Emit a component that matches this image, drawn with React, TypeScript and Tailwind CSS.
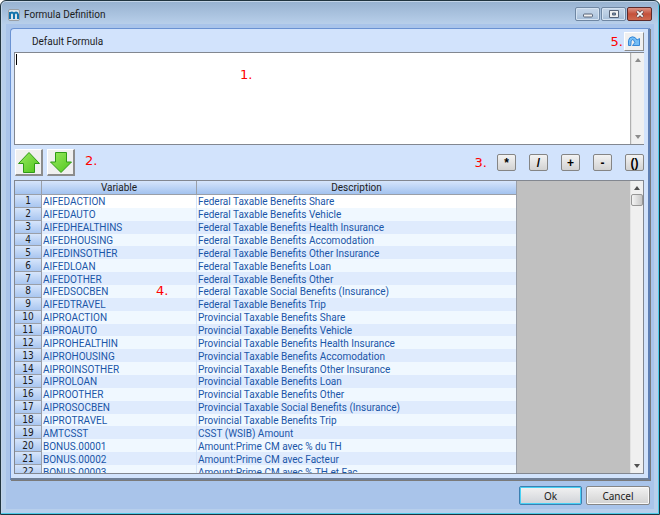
import React from "react";

const variables: [string, string][] = [
  ["AIFEDACTION", "Federal Taxable Benefits Share"],
  ["AIFEDAUTO", "Federal Taxable Benefits Vehicle"],
  ["AIFEDHEALTHINS", "Federal Taxable Benefits Health Insurance"],
  ["AIFEDHOUSING", "Federal Taxable Benefits Accomodation"],
  ["AIFEDINSOTHER", "Federal Taxable Benefits Other Insurance"],
  ["AIFEDLOAN", "Federal Taxable Benefits Loan"],
  ["AIFEDOTHER", "Federal Taxable Benefits Other"],
  ["AIFEDSOCBEN", "Federal Taxable Social Benefits (Insurance)"],
  ["AIFEDTRAVEL", "Federal Taxable Benefits Trip"],
  ["AIPROACTION", "Provincial Taxable Benefits Share"],
  ["AIPROAUTO", "Provincial Taxable Benefits Vehicle"],
  ["AIPROHEALTHIN", "Provincial Taxable Benefits Health Insurance"],
  ["AIPROHOUSING", "Provincial Taxable Benefits Accomodation"],
  ["AIPROINSOTHER", "Provincial Taxable Benefits Other Insurance"],
  ["AIPROLOAN", "Provincial Taxable Benefits Loan"],
  ["AIPROOTHER", "Provincial Taxable Benefits Other"],
  ["AIPROSOCBEN", "Provincial Taxable Social Benefits (Insurance)"],
  ["AIPROTRAVEL", "Provincial Taxable Benefits Trip"],
  ["AMTCSST", "CSST (WSIB) Amount"],
  ["BONUS.00001", "Amount:Prime CM avec % du TH"],
  ["BONUS.00002", "Amount:Prime CM avec Facteur"],
  ["BONUS.00003", "Amount:Prime CM avec % TH et Fac"],
];

function Marker({ children, className = "" }: { children: React.ReactNode; className?: string }) {
  return (
    <span className={`font-['DejaVu_Sans',sans-serif] text-[13px] leading-4 text-[#ff0000] ${className}`}>
      {children}
    </span>
  );
}

function Arrow({ down = false, muted = false }: { down?: boolean; muted?: boolean }) {
  return (
    <svg viewBox="0 0 6 4" className={`h-1 w-1.5 ${muted ? "text-[#8c8c8c]" : "text-[#505050]"}`} aria-hidden="true">
      <path d={down ? "M0 0H6L3 4Z" : "M0 4H6L3 0Z"} fill="currentColor" />
    </svg>
  );
}

function ScrollBar({ thumb = false }: { thumb?: boolean }) {
  return (
    <div className="flex w-[13px] shrink-0 flex-col items-center justify-between border-l border-[#e3e3e3] bg-[#f0f0f0] py-[5px]">
      <div className="flex w-full flex-col items-center gap-1">
        <Arrow muted={!thumb} />
        {thumb && (
          <div className="h-3 w-full rounded-xs border border-[#979797] bg-linear-to-r from-[#f4f4f4] to-[#c6c6c6]" />
        )}
      </div>
      <Arrow down muted={!thumb} />
    </div>
  );
}

function GreenArrow({ down = false }: { down?: boolean }) {
  return (
    <button
      type="button"
      aria-label={down ? "Move down" : "Move up"}
      className="flex h-[27px] w-7 items-center justify-center border-t border-r-2 border-b-2 border-l border-t-white border-r-[#8c8c8c] border-b-[#8c8c8c] border-l-white bg-[#f0f0f0]"
    >
      <svg viewBox="0 0 24 23" className="h-[23px] w-6" aria-hidden="true">
        <defs>
          <linearGradient id={down ? "greenDown" : "greenUp"} x1="0" y1="0" x2="1" y2="1">
            <stop offset="0" stopColor="#9bea62" />
            <stop offset="1" stopColor="#4fc51c" />
          </linearGradient>
        </defs>
        <path
          d={down ? "M12 21.500 22.500 11H17.500V1.500H6.500V11H1.500Z" : "M12 1.500 22.500 12.500H17.500V21.500H6.500V12.500H1.500Z"}
          fill={down ? "url(#greenDown)" : "url(#greenUp)"}
          stroke="#2f9a16"
          strokeLinejoin="round"
        />
      </svg>
    </button>
  );
}

const captionButton =
  "flex h-[14px] w-[25px] items-center justify-center rounded-xs border border-[#6f87a3] bg-linear-to-b from-[#c6d7ea] via-[#b9cde3] via-50% to-[#a5bdd8] shadow-[inset_0_0_0_1px_#d5e3f2]";

export default function App() {
  return (
    <main className="flex h-screen flex-col rounded-t-md border border-[#20343f] bg-[#b7cfec] p-px font-['Roboto',sans-serif] text-[10px] text-[#1c1c1c] shadow-[inset_-1px_-1px_0_#4ccbe8,inset_1px_1px_0_#c3d5e8]">
      <header className="flex h-[22px] shrink-0 items-center justify-between rounded-t-sm bg-linear-to-b from-[#98b3d1] to-[#b8cfea] px-1.5 pt-1">
        <div className="flex items-center gap-1">
          <span className="flex h-3 w-3 items-center justify-center rounded-xs border border-[#9a9fa5] bg-[#dfe5ea]">
            <svg viewBox="0 0 10 8" className="h-2 w-2.5 shrink-0" aria-hidden="true">
              <path d="M1 8V1M1 3Q1.500 1.500 3 1.500T5 3.500V8M5 3.500Q5.500 1.500 7 1.500T9 3.500V8" fill="none" stroke="#1373ac" strokeWidth="2" />
            </svg>
          </span>
          <h1 className="leading-4">Formula Definition</h1>
        </div>
        <div className="flex gap-px pb-0.5">
          <button type="button" aria-label="Minimize" className={captionButton}>
            <svg viewBox="0 0 10 10" className="h-2.5 w-2.5" aria-hidden="true">
              <rect x=".5" y="5" width="9" height="3" rx="1" fill="#f1f1f1" stroke="#596579" />
            </svg>
          </button>
          <button type="button" aria-label="Maximize" className={captionButton}>
            <svg viewBox="0 0 10 8" className="h-2 w-2.5" aria-hidden="true">
              <path d="M.5 .5H9.500V7.500H.5Z" fill="#f1f1f1" stroke="#596579" />
              <path d="M3.500 3H6.500V5H3.500Z" fill="#7790ad" stroke="#596579" />
            </svg>
          </button>
          <button
            type="button"
            aria-label="Close"
            className="flex h-[14px] w-[25px] items-center justify-center rounded-xs border border-[#5e2a2a] bg-linear-to-b from-[#dc9385] via-[#c4503a] via-50% to-[#cf6a50]"
          >
            <svg viewBox="0 0 10 8" className="h-2 w-2.5" aria-hidden="true">
              <path d="M2 1.200 8 6.800M8 1.200 2 6.800" stroke="#5b4348" strokeWidth="3.200" />
              <path d="M2.200 1.400 7.800 6.600M7.800 1.400 2.200 6.600" stroke="#f7f7f7" strokeWidth="1.800" />
            </svg>
          </button>
        </div>
      </header>

      <div className="mx-1 mb-1 flex min-h-0 flex-1 flex-col bg-[#a9c4ea] px-1 pt-1">
        <section className="flex min-h-0 flex-1 flex-col rounded-tl-sm border border-r-2 border-b-2 border-[#6a92d2] border-r-[#5f80b4] border-b-[#6f7f96] bg-[#d2e3fc] pr-1 pb-1 pl-[3px] shadow-[1px_1px_0_#7a7a7a]">
          <div className="flex h-[23px] items-center justify-between pt-0.5 pl-[18px]">
            <label htmlFor="formula">Default Formula</label>
            <div className="flex items-center gap-px">
              <Marker>5.</Marker>
              <button
                type="button"
                aria-label="Undo"
                className="flex h-[19px] w-5 items-center justify-center border border-white border-r-[#8c8c8c] border-b-[#8c8c8c] bg-[#f0f0f0]"
              >
                <svg viewBox="0 0 12 11" className="h-[11px] w-3" aria-hidden="true">
                  <path
                    d="M.5 9.500V4.500Q1 1 4.500 .800Q7.500 .800 9 4L11.500 2.500V9.500H4.500L6.800 6.500Q6 3.500 4.300 3.500Q2.800 4 2.800 9.500Z"
                    fill="#74bdf5"
                    stroke="#2a7fd2"
                    strokeWidth=".9"
                    strokeLinejoin="round"
                  />
                </svg>
              </button>
            </div>
          </div>

          <div className="relative flex h-[93px] shrink-0 border-y border-l border-[#828790]">
            <textarea
              id="formula"
              className="min-w-0 flex-1 resize-none overflow-hidden border-r border-[#b0b0b0] bg-white p-1 outline-none"
            />
            <ScrollBar />
            <span className="absolute top-px left-px h-[11px] w-px bg-black" />
            <Marker className="absolute top-[14px] left-[225px]">1.</Marker>
          </div>

          <div className="flex h-[35px] shrink-0 items-center justify-between">
            <div className="flex items-center gap-1 pl-px">
              <GreenArrow />
              <GreenArrow down />
              <Marker className="pb-1 pl-1.5">2.</Marker>
            </div>
            <div className="flex items-center gap-2.5">
              <Marker>3.</Marker>
              <div className="flex gap-[13px]">
                {["*", "/", "+", "-", "()"].map((op) => (
                  <button
                    key={op}
                    type="button"
                    className="flex h-[17px] w-[19px] items-center justify-center rounded-xs border border-[#858585] bg-linear-to-b from-[#f3f3f3] to-[#d2d2d2] font-['Liberation_Sans',sans-serif] text-[12px] leading-3 font-bold text-black"
                  >
                    {op}
                  </button>
                ))}
              </div>
            </div>
          </div>

          <div className="relative flex min-h-0 flex-1 border border-[#828790] bg-[#c0c0c0]">
            <div className="min-w-0 flex-1 overflow-hidden">
              <table className="h-[297px] w-[502px] table-fixed border-separate border-spacing-0 text-left leading-[11px]">
                <colgroup>
                  <col className="w-[27px]" />
                  <col className="w-[155px]" />
                  <col />
                </colgroup>
                <thead>
                  <tr className="h-[14px] bg-linear-to-b from-[#d6e5fb] to-[#9fc0ee] text-center text-[#1c1c1c]">
                    <th className="border-r border-b border-[#9a9fa8] p-0" aria-label="Row" />
                    <th className="border-r border-b border-[#9a9fa8] p-0 font-normal">Variable</th>
                    <th className="border-r border-b border-[#9a9fa8] p-0 font-normal">Description</th>
                  </tr>
                </thead>
                <tbody>
                  {variables.map(([name, description], i) => (
                    <tr
                      key={name}
                      className={`text-[#1a56a8] ${i === 0 ? "bg-white" : i % 2 ? "bg-[#f0f8ff]" : "bg-[#dfebfd]"}`}
                    >
                      <th className="border-r border-b border-[#9a9fa8] bg-linear-to-b from-[#d6e5fb] to-[#a9c6f0] p-0 text-center font-['DejaVu_Sans_Condensed','DejaVu_Sans',sans-serif] font-normal text-[#1c1c1c]">
                        {i + 1}
                      </th>
                      <td className="border-r border-[#d3e3f8] p-0 pt-px pl-px whitespace-nowrap">{name}</td>
                      <td className="border-r border-r-[#9a9fa8] p-0 pt-px pl-px whitespace-nowrap">{description}</td>
                    </tr>
                  ))}
                </tbody>
              </table>
            </div>
            <ScrollBar thumb />
            <Marker className="absolute top-[102px] left-[141px]">4.</Marker>
          </div>
        </section>

        <footer className="flex shrink-0 justify-end gap-1 pt-1.5 pb-1 font-['Noto_Sans',sans-serif]">
          <button
            type="button"
            className="h-[19px] w-[63px] rounded-xs border border-[#3c7fb1] bg-linear-to-b from-[#f2f2f2] to-[#d0d3d8] leading-4 shadow-[inset_0_0_0_1px_#48d1f5]"
          >
            Ok
          </button>
          <button
            type="button"
            className="h-[19px] w-[64px] rounded-xs border border-[#858585] bg-linear-to-b from-[#f2f2f2] to-[#d2d2d2] leading-4 shadow-[inset_0_0_0_1px_#f8f8f8]"
          >
            Cancel
          </button>
        </footer>
      </div>
    </main>
  );
}
